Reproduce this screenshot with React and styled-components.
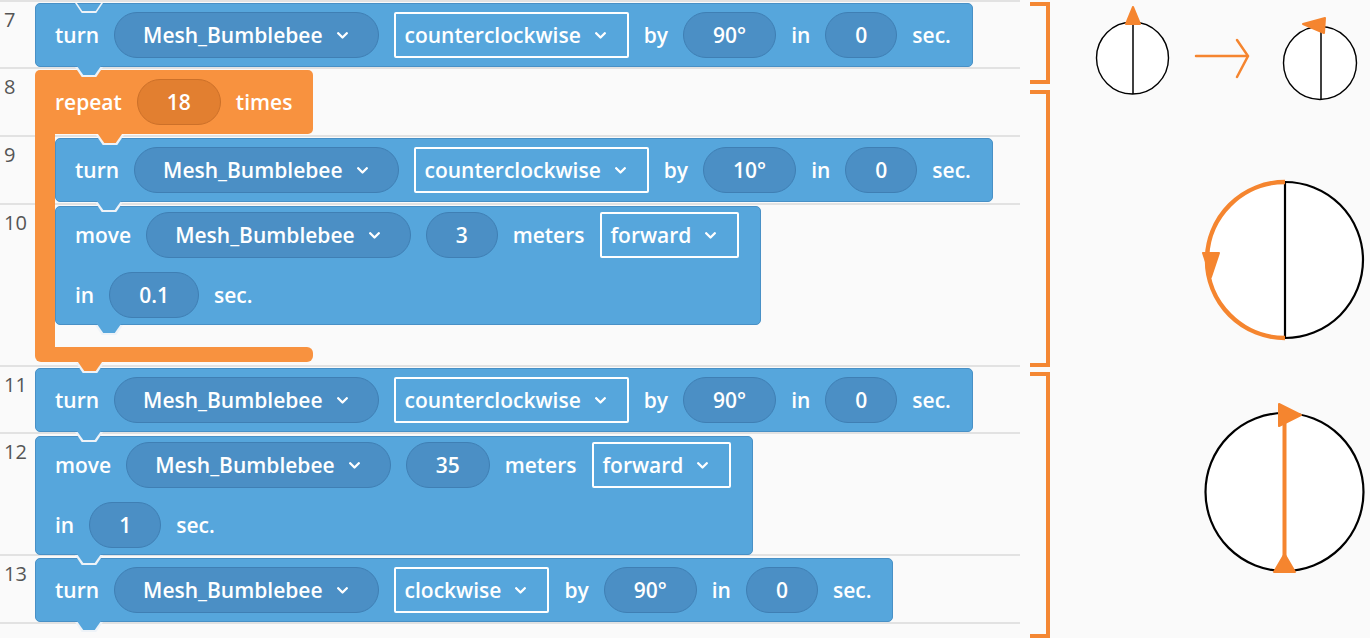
import styled, { createGlobalStyle } from "styled-components";

const BLUE = "#56a6dc";
const ORANGE = "#f8923f";
const ACCENT = "#f5852f";

const lines = [
  { n: 7, h: 67 },
  { n: 8, h: 68 },
  { n: 9, h: 68 },
  { n: 10, h: 162 },
  { n: 11, h: 67 },
  { n: 12, h: 122 },
  { n: 13, h: 68 },
];

function Chevron() {
  return (
    <ChevronIcon width="11" height="7" viewBox="0 0 11 7">
      <polyline points="1.2,1.2 5.5,5.5 9.8,1.2" fill="none" stroke="#fff" strokeWidth="2.3" strokeLinecap="round" strokeLinejoin="round" />
    </ChevronIcon>
  );
}

function TurnBlock({ mt, object, direction, angle, time, first }) {
  return (
    <Block $mt={mt}>
      {first && <TopTab />}
      <BlockRow>
        <Word>turn</Word>
        <Pill $select>{object}<Chevron /></Pill>
        <Dropdown>{direction}<Chevron /></Dropdown>
        <Word>by</Word>
        <Pill>{angle}</Pill>
        <Word>in</Word>
        <Pill>{time}</Pill>
        <Word>sec.</Word>
      </BlockRow>
    </Block>
  );
}

function MoveBlock({ mt, object, distance, direction, time }) {
  return (
    <Block $mt={mt} $tall>
      <BlockRow>
        <Word>move</Word>
        <Pill $select>{object}<Chevron /></Pill>
        <Pill>{distance}</Pill>
        <Word>meters</Word>
        <Dropdown>{direction}<Chevron /></Dropdown>
      </BlockRow>
      <BlockRow>
        <Word>in</Word>
        <Pill>{time}</Pill>
        <Word>sec.</Word>
      </BlockRow>
    </Block>
  );
}

function RepeatBlock({ mt, times, width, children }) {
  return (
    <Repeat $mt={mt}>
      <RepeatHead>
        <BlockRow>
          <Word>repeat</Word>
          <Pill $orange>{times}</Pill>
          <Word>times</Word>
        </BlockRow>
      </RepeatHead>
      <RepeatBody>
        <Arm />
        <Inner>{children}</Inner>
      </RepeatBody>
      <RepeatFoot $width={width} />
    </Repeat>
  );
}

function App() {
  return (
    <>
      <GlobalStyle />
      <Page>
        <Editor>
          <Lines>
            {lines.map((l) => (
              <Line key={l.n} $h={l.h}>
                <LineNo>{l.n}</LineNo>
              </Line>
            ))}
          </Lines>
          <Blocks>
            <TurnBlock first mt={3} object="Mesh_Bumblebee" direction="counterclockwise" angle="90°" time="0" />
            <RepeatBlock mt={3} times="18" width={278}>
              <TurnBlock mt={0} object="Mesh_Bumblebee" direction="counterclockwise" angle="10°" time="0" />
              <MoveBlock mt={4} object="Mesh_Bumblebee" distance="3" direction="forward" time="0.1" />
            </RepeatBlock>
            <TurnBlock mt={6} object="Mesh_Bumblebee" direction="counterclockwise" angle="90°" time="0" />
            <MoveBlock mt={4} object="Mesh_Bumblebee" distance="35" direction="forward" time="1" />
            <TurnBlock mt={3} object="Mesh_Bumblebee" direction="clockwise" angle="90°" time="0" />
          </Blocks>
        </Editor>

        <Side>
          <Group $mt={2} $h={82}>
            <Bracket />
            <Figure>
              <svg width="320" height="100" viewBox="0 0 320 100">
                <circle cx="82.5" cy="56" r="36" fill="#fff" stroke="#000" strokeWidth="1.4" />
                <line x1="83" y1="20" x2="83" y2="92" stroke="#000" strokeWidth="1.5" />
                <polygon points="83,5 76,22 90,22" fill={ACCENT} stroke={ACCENT} strokeWidth="2" strokeLinejoin="round" />
                <g fill="none" stroke={ACCENT} strokeWidth="2.5" strokeLinecap="round">
                  <line x1="146" y1="54" x2="197" y2="54" />
                  <polyline points="187,38 198,54 187,75" />
                </g>
                <circle cx="270" cy="61" r="36.5" fill="#fff" stroke="#000" strokeWidth="1.4" />
                <line x1="271" y1="25" x2="271" y2="97" stroke="#000" strokeWidth="1.5" />
                <polygon points="253,22 275,16 274,31" fill={ACCENT} stroke={ACCENT} strokeWidth="2" strokeLinejoin="round" />
              </svg>
            </Figure>
          </Group>
          <Group $mt={6} $h={277}>
            <Bracket />
            <Figure>
              <svg width="320" height="277" viewBox="0 0 320 277">
                <circle cx="235" cy="170" r="78" fill="#fff" stroke="#000" strokeWidth="2.2" />
                <line x1="235" y1="92" x2="235" y2="248" stroke="#000" strokeWidth="2.2" />
                <path d="M235,92 A78,78 0 0,0 235,248" fill="none" stroke={ACCENT} strokeWidth="4.5" />
                <polygon points="153,163 169,163 161,187" fill={ACCENT} stroke={ACCENT} strokeWidth="2" strokeLinejoin="round" />
              </svg>
            </Figure>
          </Group>
          <Group $mt={5} $h={266}>
            <Bracket />
            <Figure>
              <svg width="320" height="266" viewBox="0 0 320 266">
                <circle cx="234.5" cy="120" r="79" fill="#fff" stroke="#000" strokeWidth="2.2" />
                <line x1="234.5" y1="50" x2="234.5" y2="190" stroke={ACCENT} strokeWidth="4" />
                <polygon points="229,32 251,43 229,54" fill={ACCENT} stroke={ACCENT} strokeWidth="2" strokeLinejoin="round" />
                <polygon points="224,200 245,200 234.5,182" fill={ACCENT} stroke={ACCENT} strokeWidth="2" strokeLinejoin="round" />
              </svg>
            </Figure>
          </Group>
        </Side>
      </Page>
    </>
  );
}

export default App;

const GlobalStyle = createGlobalStyle`
  html, body {
    margin: 0;
    height: 100%;
    overflow: hidden;
    background: #fafafa;
    font-family: "Open Sans", "Noto Sans", sans-serif;
  }
`;

const Page = styled.div`
  display: grid;
  grid-template-columns: 1020px 1fr;
  height: 638px;
  overflow: hidden;
`;

const Editor = styled.div`
  display: grid;
  align-items: start;
  border-top: 2px solid #e2e2e2;

  & > * {
    grid-area: 1 / 1;
  }
`;

const Lines = styled.div`
  display: flex;
  flex-direction: column;
`;

const Line = styled.div`
  height: ${(p) => p.$h}px;
  box-sizing: border-box;
  border-bottom: 2px solid #e2e2e2;
`;

const LineNo = styled.div`
  padding: 4px 0 0 4px;
  font-size: 20px;
  color: #555;
`;

const Blocks = styled.div`
  display: flex;
  flex-direction: column;
  align-items: flex-start;
  padding-left: 35px;
  margin-top: -2px;
`;

const Block = styled.div`
  position: relative;
  display: flex;
  flex-direction: column;
  gap: 14px;
  margin-top: ${(p) => p.$mt}px;
  padding: ${(p) => (p.$tall ? "5px 21px 6px 19px" : "8px 21px 8px 19px")};
  background: ${BLUE};
  border: 1px solid #4890c6;
  border-radius: 5px;

  &::before {
    content: "";
    position: absolute;
    top: calc(100% + 1px);
    left: 39px;
    width: 28px;
    height: 10px;
    background: #eef3f8;
    clip-path: polygon(0 0, 100% 0, 76% 100%, 24% 100%);
    z-index: 2;
  }

  &::after {
    content: "";
    position: absolute;
    top: 100%;
    left: 41px;
    width: 24px;
    height: 9px;
    background: ${BLUE};
    clip-path: polygon(0 0, 100% 0, 74% 100%, 26% 100%);
    z-index: 3;
  }
`;

const TopTab = styled.span`
  position: absolute;
  top: -1px;
  left: 39px;
  width: 28px;
  height: 10px;
  background: #eef3f8;
  clip-path: polygon(0 0, 7% 0, 26% 80%, 74% 80%, 93% 0, 100% 0, 76% 100%, 24% 100%);
`;

const BlockRow = styled.div`
  display: flex;
  align-items: center;
  gap: 15px;
  height: 46px;
`;

const Word = styled.span`
  color: #fff;
  font-size: 21px;
  font-weight: 600;
  white-space: nowrap;
`;

const Pill = styled.span`
  display: flex;
  align-items: center;
  box-sizing: border-box;
  height: 46px;
  padding: ${(p) => (p.$select ? "0 30px 0 28px" : "0 29px")};
  border-radius: 23px;
  background: ${(p) => (p.$orange ? "#e27f30" : "#4b8fc5")};
  border: 1px solid ${(p) => (p.$orange ? "#cc7029" : "#3f7fb4")};
  color: #fff;
  font-size: 21px;
  font-weight: 600;
  white-space: nowrap;
`;

const Dropdown = styled.span`
  display: flex;
  align-items: center;
  box-sizing: border-box;
  height: 46px;
  padding: 0 21px 0 9px;
  border: 2px solid #fff;
  border-radius: 2px;
  color: #fff;
  font-size: 21px;
  font-weight: 600;
  white-space: nowrap;
`;

const ChevronIcon = styled.svg`
  display: block;
  margin-left: 14px;
  flex: none;
`;

const Repeat = styled.div`
  display: flex;
  flex-direction: column;
  align-items: flex-start;
  margin-top: ${(p) => p.$mt}px;
`;

const RepeatHead = styled.div`
  position: relative;
  padding: 9px 21px 9px 20px;
  background: ${ORANGE};
  border-radius: 5px 5px 5px 0;

  &::before {
    content: "";
    position: absolute;
    top: calc(100% + 1px);
    left: 61px;
    width: 28px;
    height: 10px;
    background: #eef3f8;
    clip-path: polygon(0 0, 100% 0, 76% 100%, 24% 100%);
    z-index: 2;
  }

  &::after {
    content: "";
    position: absolute;
    top: 100%;
    left: 63px;
    width: 24px;
    height: 9px;
    background: ${ORANGE};
    clip-path: polygon(0 0, 100% 0, 74% 100%, 26% 100%);
    z-index: 3;
  }
`;

const RepeatBody = styled.div`
  display: flex;
  align-items: stretch;
`;

const Arm = styled.div`
  width: 20px;
  background: ${ORANGE};
  flex: none;
`;

const Inner = styled.div`
  display: flex;
  flex-direction: column;
  align-items: flex-start;
  padding: 4px 0 22px;
`;

const RepeatFoot = styled.div`
  position: relative;
  width: ${(p) => p.$width}px;
  height: 15px;
  background: ${ORANGE};
  border-radius: 0 6px 6px 6px;

  &::before {
    content: "";
    position: absolute;
    top: calc(100% + 1px);
    left: 41px;
    width: 28px;
    height: 10px;
    background: #eef3f8;
    clip-path: polygon(0 0, 100% 0, 76% 100%, 24% 100%);
    z-index: 2;
  }

  &::after {
    content: "";
    position: absolute;
    top: 100%;
    left: 43px;
    width: 24px;
    height: 9px;
    background: ${ORANGE};
    clip-path: polygon(0 0, 100% 0, 74% 100%, 26% 100%);
    z-index: 3;
  }
`;

const Side = styled.div`
  display: flex;
  flex-direction: column;
`;

const Group = styled.div`
  display: flex;
  flex: none;
  height: ${(p) => p.$h}px;
  margin-top: ${(p) => p.$mt}px;
`;

const Bracket = styled.div`
  box-sizing: border-box;
  width: 20px;
  margin-left: 10px;
  border: 4px solid #f48733;
  border-left: none;
  flex: none;
`;

const Figure = styled.div`
  flex: 1;
  position: relative;
  z-index: 1;

  svg {
    display: block;
    overflow: visible;
  }
`;
